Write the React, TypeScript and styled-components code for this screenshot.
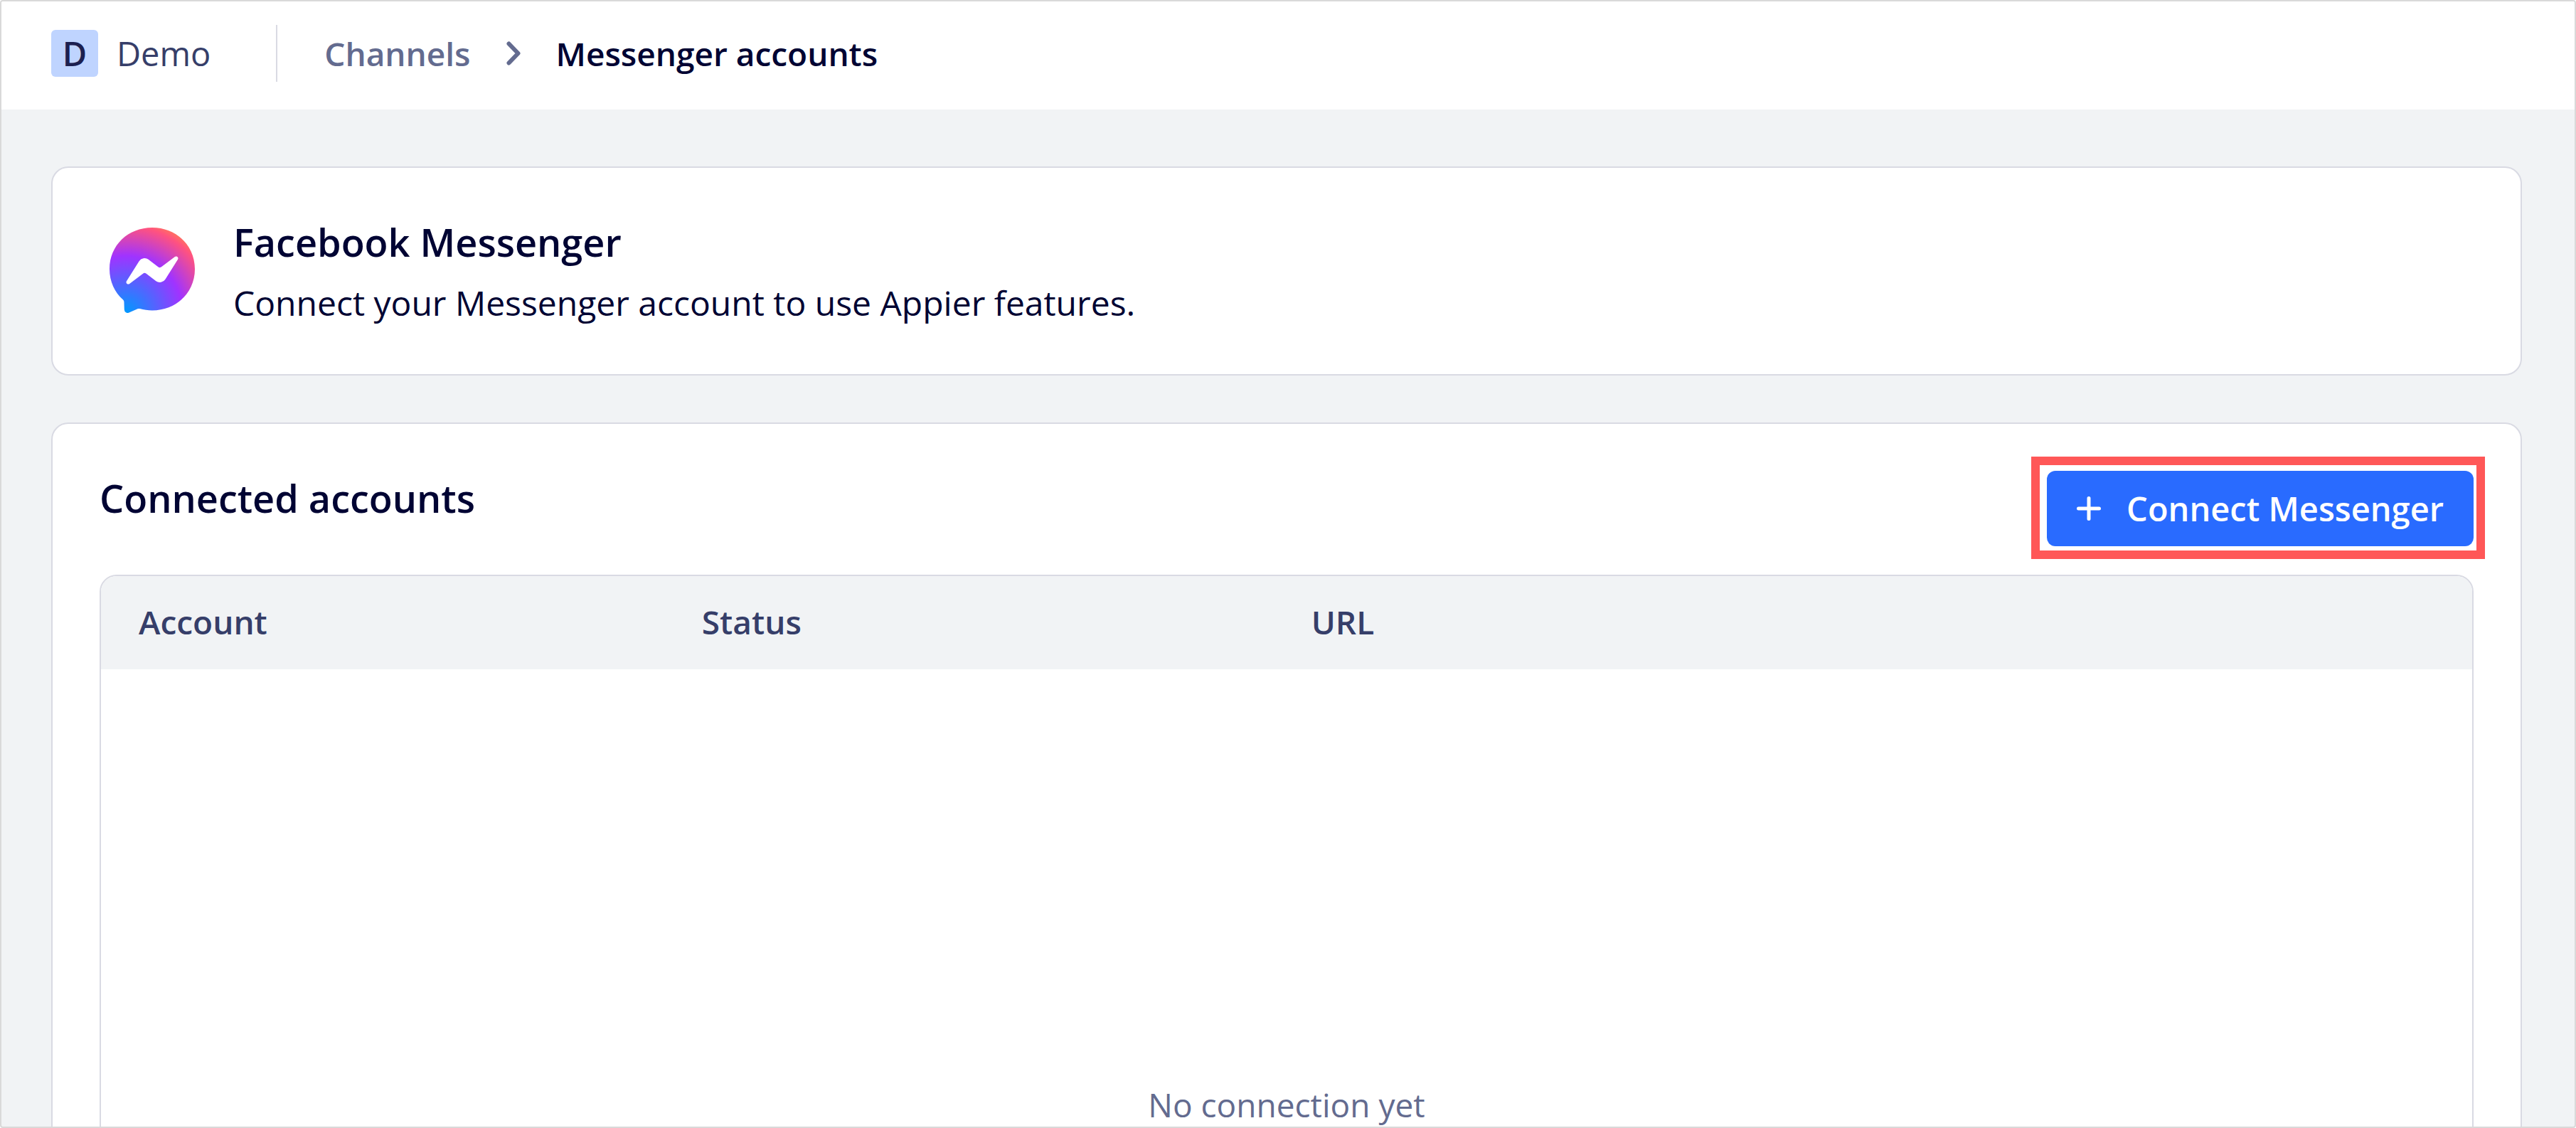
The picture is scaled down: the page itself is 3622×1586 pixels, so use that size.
import React from "react";
import styled, { createGlobalStyle } from "styled-components";

const color = {
  canvas: "#f1f3f5",
  surface: "#ffffff",
  line: "#d9dae3",
  frame: "#d9d9d9",
  ink: "#000433",
  inkSoft: "#363e69",
  inkMuted: "#636b8f",
  badge: "#bfd4ff",
  badgeInk: "#1c2050",
  primary: "#296bff",
  highlight: "#ff5757",
};

const GlobalStyle = createGlobalStyle`
  *, *::before, *::after { box-sizing: border-box; }
  body {
    margin: 0;
    background: ${color.surface};
    color: ${color.ink};
    font: 400 46px/64px "Open Sans", "Noto Sans", sans-serif;
  }
`;

const Page = styled.div`
  display: flex;
  flex-direction: column;
  height: 100vh;
  overflow: hidden;
  border: 2px solid ${color.frame};
  border-radius: 4px;
  background: ${color.canvas};
`;

const TopBar = styled.header`
  display: flex;
  align-items: center;
  flex: none;
  padding: 33px 70px 39px;
  background: ${color.surface};
`;

const Workspace = styled.a`
  display: flex;
  align-items: center;
  gap: 26px;
  margin-right: 92px;
  color: ${color.inkSoft};
  font-size: 47px;
  text-decoration: none;
`;

const WorkspaceBadge = styled.span`
  display: grid;
  place-items: center;
  width: 66px;
  height: 66px;
  border-radius: 6px;
  background: ${color.badge};
  color: ${color.badgeInk};
  font-weight: 600;
`;

const Breadcrumb = styled.nav`
  display: flex;
  align-items: center;
  gap: 50px;
  height: 80px;
  padding-left: 66px;
  border-left: 2px solid ${color.line};
  font-weight: 600;
`;

const CrumbLink = styled.a`
  color: ${color.inkMuted};
  text-decoration: none;
`;

const Content = styled.main`
  display: flex;
  flex-direction: column;
  flex: 1;
  gap: 66px;
  min-height: 0;
  padding: 80px 74px 0 70px;
`;

const Card = styled.section`
  flex: none;
  border: 2px solid ${color.line};
  border-radius: 24px;
  background: ${color.surface};
`;

const IntroCard = styled(Card)`
  display: flex;
  align-items: center;
  gap: 54px;
  padding: 66px 80px 68px;
`;

const IntroText = styled.div`
  display: flex;
  flex-direction: column;
  gap: 16px;
`;

const Title = styled.h2`
  margin: 0;
  font-size: 54px;
  font-weight: 600;
  line-height: 76px;
`;

const Description = styled.p`
  margin: 0;
  font-size: 48px;
`;

const AccountsCard = styled(Card)`
  display: flex;
  flex-direction: column;
  gap: 40px;
  padding: 66px;
`;

const CardHeader = styled.div`
  display: flex;
  align-items: flex-start;
  justify-content: space-between;
`;

const Highlight = styled.div`
  position: relative;

  &::after {
    content: "";
    position: absolute;
    inset: -20px -16px -18px -22px;
    border: 12px solid ${color.highlight};
    pointer-events: none;
  }
`;

const PrimaryButton = styled.button`
  display: flex;
  align-items: center;
  gap: 36px;
  height: 106px;
  padding: 0 42px;
  border: 0;
  border-radius: 12px;
  background: ${color.primary};
  color: #ffffff;
  font: inherit;
  font-size: 47px;
  font-weight: 600;
  white-space: nowrap;
  cursor: pointer;
`;

const TableFrame = styled.div`
  overflow: hidden;
  border: 2px solid ${color.line};
  border-radius: 24px;
`;

const Table = styled.table`
  width: 100%;
  border-collapse: collapse;
  table-layout: fixed;
`;

const HeadCell = styled.th<{ $width?: string }>`
  width: ${(p) => p.$width ?? "auto"};
  height: 131px;
  padding: 0 53px 4px;
  background: ${color.canvas};
  color: ${color.inkSoft};
  font-weight: 600;
  text-align: left;
`;

const EmptyCell = styled.td`
  padding: 580px 0;
  color: ${color.inkMuted};
  text-align: center;
`;

const ChevronIcon = () => (
  <svg width="20" height="34" viewBox="0 0 20 34" fill="none" aria-hidden="true">
    <path d="M3.5 3.5 16.5 17 3.5 30.5" stroke={color.inkMuted} strokeWidth="6" strokeLinecap="round" strokeLinejoin="round" />
  </svg>
);

const PlusIcon = () => (
  <svg width="34" height="34" viewBox="0 0 34 34" fill="none" aria-hidden="true">
    <path d="M17 2.5v29M2.5 17h29" stroke="currentColor" strokeWidth="5" strokeLinecap="round" />
  </svg>
);

const MessengerLogo = () => (
  <svg width="120" height="120" viewBox="0 0 800 800" role="img" aria-label="Messenger">
    <radialGradient id="messenger-fill" cx="19.25%" cy="99.45%" r="108.96%">
      <stop offset="0" stopColor="#0099ff" />
      <stop offset="0.61" stopColor="#a033ff" />
      <stop offset="0.93" stopColor="#ff5280" />
      <stop offset="1" stopColor="#ff7061" />
    </radialGradient>
    <path
      fill="url(#messenger-fill)"
      d="M400 0C174.7 0 0 165.1 0 388c0 116.6 47.8 217.4 125.6 287 6.5 5.8 10.5 14 10.7 22.8l2.2 71.2a32 32 0 0 0 44.9 28.3l79.4-35c6.7-3 14.3-3.5 21.4-1.6 36.5 10 75.3 15.4 115.8 15.4 225.3 0 400-165.1 400-388S625.3 0 400 0z"
    />
    <path
      fill="#ffffff"
      d="M159.8 501.5l117.5-186.4a60 60 0 0 1 86.8-16l93.5 70.1a24 24 0 0 0 28.9-.1l126.2-95.8c16.8-12.8 38.8 7.4 27.6 25.3L522.7 484.9a60 60 0 0 1-86.8 16l-93.5-70.1a24 24 0 0 0-28.9.1l-126.2 95.8c-16.8 12.8-38.8-7.3-27.5-25.2z"
    />
  </svg>
);

export default function App() {
  return (
    <>
      <GlobalStyle />
      <Page>
        <TopBar>
          <Workspace href="#workspace">
            <WorkspaceBadge>D</WorkspaceBadge>
            Demo
          </Workspace>
          <Breadcrumb aria-label="Breadcrumb">
            <CrumbLink href="#channels">Channels</CrumbLink>
            <ChevronIcon />
            <span aria-current="page">Messenger accounts</span>
          </Breadcrumb>
        </TopBar>
        <Content>
          <IntroCard>
            <MessengerLogo />
            <IntroText>
              <Title>Facebook Messenger</Title>
              <Description>Connect your Messenger account to use Appier features.</Description>
            </IntroText>
          </IntroCard>
          <AccountsCard>
            <CardHeader>
              <Title>Connected accounts</Title>
              <Highlight>
                <PrimaryButton type="button">
                  <PlusIcon />
                  Connect Messenger
                </PrimaryButton>
              </Highlight>
            </CardHeader>
            <TableFrame>
              <Table>
                <thead>
                  <tr>
                    <HeadCell scope="col" $width="23.75%">Account</HeadCell>
                    <HeadCell scope="col" $width="25.7%">Status</HeadCell>
                    <HeadCell scope="col">URL</HeadCell>
                  </tr>
                </thead>
                <tbody>
                  <tr>
                    <EmptyCell colSpan={3}>No connection yet</EmptyCell>
                  </tr>
                </tbody>
              </Table>
            </TableFrame>
          </AccountsCard>
        </Content>
      </Page>
    </>
  );
}
